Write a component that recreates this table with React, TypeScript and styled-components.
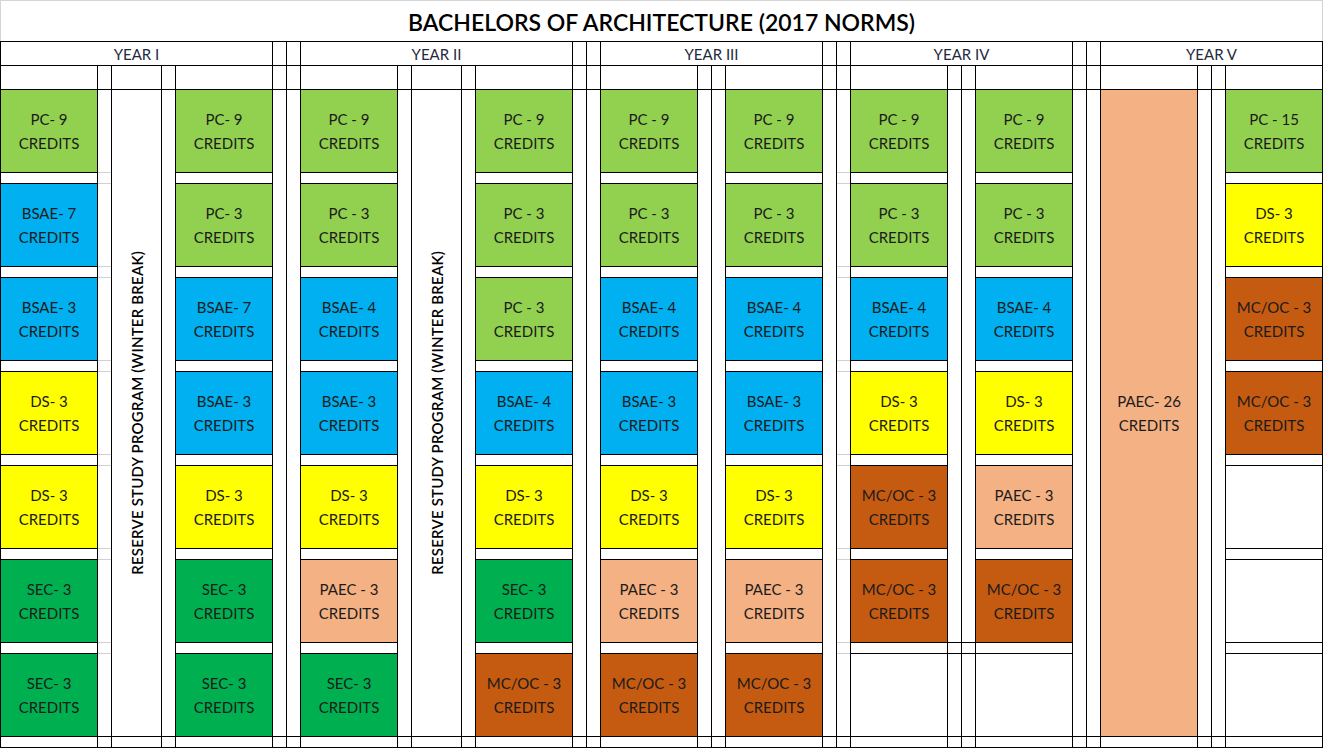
import React from "react";
import styled, { createGlobalStyle } from "styled-components";

const GlobalStyle = createGlobalStyle`
  html, body { margin: 0; padding: 0; background: #ffffff; }
  body { font-family: Lato, "Liberation Sans", sans-serif; color: #1b1b1b; }
`;

type Line = "black" | "gray" | "none";

const COLORS: Record<string, string> = {
  pc: "#92D050",
  bsae: "#00B0F0",
  ds: "#FFFF00",
  sec: "#00B050",
  paec: "#F4B183",
  mc: "#C55A11",
  empty: "#FFFFFF",
};

type Item = { c: keyof typeof COLORS; t: string };

type ColSpec =
  | { w: number; kind: "blocks"; items: (Item | null)[] }
  | { w: number; kind: "tall"; item: Item }
  | { w: number; kind: "plain"; gaps: Line[] }
  | { w: number; kind: "reserve" };

const NONE: Line[] = ["none", "none", "none", "none", "none", "none"];
const GRAY: Line[] = ["gray", "gray", "gray", "gray", "gray", "gray"];
const IV_MID: Line[] = ["none", "none", "none", "none", "none", "black"];

const i = (c: keyof typeof COLORS, t: string): Item => ({ c, t });

const sep = (gaps: Line[] = NONE): ColSpec => ({ w: 14, kind: "plain", gaps });

const columns: ColSpec[] = [
  // YEAR I
  {
    w: 97,
    kind: "blocks",
    items: [i("pc", "PC- 9"), i("bsae", "BSAE- 7"), i("bsae", "BSAE- 3"), i("ds", "DS- 3"), i("ds", "DS- 3"), i("sec", "SEC- 3"), i("sec", "SEC- 3")],
  },
  sep(GRAY),
  { w: 50, kind: "reserve" },
  sep(),
  {
    w: 97,
    kind: "blocks",
    items: [i("pc", "PC- 9"), i("pc", "PC- 3"), i("bsae", "BSAE- 7"), i("bsae", "BSAE- 3"), i("ds", "DS- 3"), i("sec", "SEC- 3"), i("sec", "SEC- 3")],
  },
  sep(),
  sep(),
  // YEAR II
  {
    w: 97,
    kind: "blocks",
    items: [i("pc", "PC - 9"), i("pc", "PC - 3"), i("bsae", "BSAE- 4"), i("bsae", "BSAE- 3"), i("ds", "DS- 3"), i("paec", "PAEC - 3"), i("sec", "SEC- 3")],
  },
  sep(),
  { w: 50, kind: "reserve" },
  sep(),
  {
    w: 97,
    kind: "blocks",
    items: [i("pc", "PC - 9"), i("pc", "PC - 3"), i("pc", "PC - 3"), i("bsae", "BSAE- 4"), i("ds", "DS- 3"), i("sec", "SEC- 3"), i("mc", "MC/OC - 3")],
  },
  sep(),
  sep(),
  // YEAR III
  {
    w: 97,
    kind: "blocks",
    items: [i("pc", "PC - 9"), i("pc", "PC - 3"), i("bsae", "BSAE- 4"), i("bsae", "BSAE- 3"), i("ds", "DS- 3"), i("paec", "PAEC - 3"), i("mc", "MC/OC - 3")],
  },
  sep(),
  sep(),
  {
    w: 97,
    kind: "blocks",
    items: [i("pc", "PC - 9"), i("pc", "PC - 3"), i("bsae", "BSAE- 4"), i("bsae", "BSAE- 3"), i("ds", "DS- 3"), i("paec", "PAEC - 3"), i("mc", "MC/OC - 3")],
  },
  sep(),
  sep(GRAY),
  // YEAR IV
  {
    w: 97,
    kind: "blocks",
    items: [i("pc", "PC - 9"), i("pc", "PC - 3"), i("bsae", "BSAE- 4"), i("ds", "DS- 3"), i("mc", "MC/OC - 3"), i("mc", "MC/OC - 3"), null],
  },
  sep(IV_MID),
  sep(IV_MID),
  {
    w: 97,
    kind: "blocks",
    items: [i("pc", "PC - 9"), i("pc", "PC - 3"), i("bsae", "BSAE- 4"), i("ds", "DS- 3"), i("paec", "PAEC - 3"), i("mc", "MC/OC - 3"), null],
  },
  sep(),
  sep(),
  // YEAR V
  { w: 97, kind: "tall", item: i("paec", "PAEC- 26") },
  sep(),
  sep(),
  {
    w: 97,
    kind: "blocks",
    items: [i("pc", "PC - 15"), i("ds", "DS- 3"), i("mc", "MC/OC - 3"), i("mc", "MC/OC - 3"), null, null, null],
  },
];

const years: { label: string; w: number }[] = [
  { label: "YEAR I", w: 272 },
  { label: "YEAR II", w: 272 },
  { label: "YEAR III", w: 222 },
  { label: "YEAR IV", w: 222 },
  { label: "YEAR V", w: 222 },
];

const BLOCK_H = 83;
const GAP_H = 11;
const AREA_H = BLOCK_H * 7 + GAP_H * 6;

const lineColor = (l: Line) => (l === "black" ? "#000000" : l === "gray" ? "#d0d0d0" : "transparent");

const Page = styled.div`
  width: 1323px;
  display: flex;
  flex-direction: column;
`;

const Title = styled.div`
  height: 41px;
  box-sizing: border-box;
  border: 1px solid #d4d4d4;
  border-bottom: none;
  display: flex;
  align-items: center;
  justify-content: center;
  font-family: Lato, "Liberation Sans", sans-serif;
  font-size: 23px;
  font-weight: 600;
  color: #000000;
  padding-top: 1px;
`;

const Table = styled.div`
  display: flex;
  flex-direction: column;
  box-sizing: border-box;
  border-right: 1px solid #000;
  border-bottom: 1px solid #000;
`;

const HeaderRow = styled.div`
  display: flex;
  height: 24px;
`;

const HeaderCell = styled.div<{ $w: number }>`
  width: ${(p) => p.$w}px;
  flex: none;
  box-sizing: border-box;
  border-left: 1px solid #000;
  border-top: 1px solid #000;
  display: flex;
  align-items: center;
  justify-content: center;
  font-size: 15px;
  color: #1f2a40;
`;

const Body = styled.div`
  display: flex;
`;

const Column = styled.div<{ $w: number }>`
  width: ${(p) => p.$w}px;
  flex: none;
  box-sizing: border-box;
  border-left: 1px solid #000;
  display: flex;
  flex-direction: column;
`;

const Slot = styled.div<{ $h: number; $line: Line; $fill?: string }>`
  height: ${(p) => p.$h}px;
  flex: none;
  box-sizing: border-box;
  border-top: 1px solid ${(p) => lineColor(p.$line)};
  background: ${(p) => p.$fill ?? "#ffffff"};
  display: flex;
  flex-direction: column;
  align-items: center;
  justify-content: center;
  font-size: 15px;
  line-height: 24px;
  color: #1b1b1b;
  text-align: center;
  white-space: nowrap;
`;

const VerticalText = styled.div`
  writing-mode: vertical-rl;
  transform: rotate(180deg);
  font-size: 15px;
  font-weight: 600;
  letter-spacing: 0.2px;
  color: #000000;
  white-space: nowrap;
`;

const Label: React.FC<{ item: Item }> = ({ item }) => (
  <>
    <span>{item.t}</span>
    <span>CREDITS</span>
  </>
);

function renderColumn(col: ColSpec, idx: number) {
  const slots: React.ReactNode[] = [];
  slots.push(<Slot key="top" $h={24} $line="black" />);
  if (col.kind === "blocks") {
    col.items.forEach((it, k) => {
      slots.push(
        <Slot key={`b${k}`} $h={BLOCK_H} $line="black" $fill={it ? COLORS[it.c] : undefined}>
          {it && <Label item={it} />}
        </Slot>
      );
      if (k < 6) slots.push(<Slot key={`g${k}`} $h={GAP_H} $line="black" />);
    });
  } else if (col.kind === "tall") {
    slots.push(
      <Slot key="tall" $h={AREA_H} $line="black" $fill={COLORS[col.item.c]}>
        <Label item={col.item} />
      </Slot>
    );
  } else if (col.kind === "reserve") {
    slots.push(
      <Slot key="res" $h={AREA_H} $line="black">
        <VerticalText>RESERVE STUDY PROGRAM (WINTER BREAK)</VerticalText>
      </Slot>
    );
  } else {
    for (let k = 0; k < 7; k++) {
      slots.push(<Slot key={`b${k}`} $h={BLOCK_H} $line={k === 0 ? "black" : col.gaps[k - 1]} />);
      if (k < 6) slots.push(<Slot key={`g${k}`} $h={GAP_H} $line={col.gaps[k]} />);
    }
  }
  slots.push(<Slot key="bottom" $h={GAP_H} $line="black" />);
  return (
    <Column key={idx} $w={col.w}>
      {slots}
    </Column>
  );
}

export default function App() {
  const header: React.ReactNode[] = [];
  years.forEach((y, k) => {
    header.push(
      <HeaderCell key={y.label} $w={y.w}>
        {y.label}
      </HeaderCell>
    );
    if (k < years.length - 1) {
      header.push(<HeaderCell key={`s${k}a`} $w={14} />);
      header.push(<HeaderCell key={`s${k}b`} $w={14} />);
    }
  });

  return (
    <>
      <GlobalStyle />
      <Page>
        <Title>BACHELORS OF ARCHITECTURE (2017 NORMS)</Title>
        <Table>
          <HeaderRow>{header}</HeaderRow>
          <Body>{columns.map(renderColumn)}</Body>
        </Table>
      </Page>
    </>
  );
}
